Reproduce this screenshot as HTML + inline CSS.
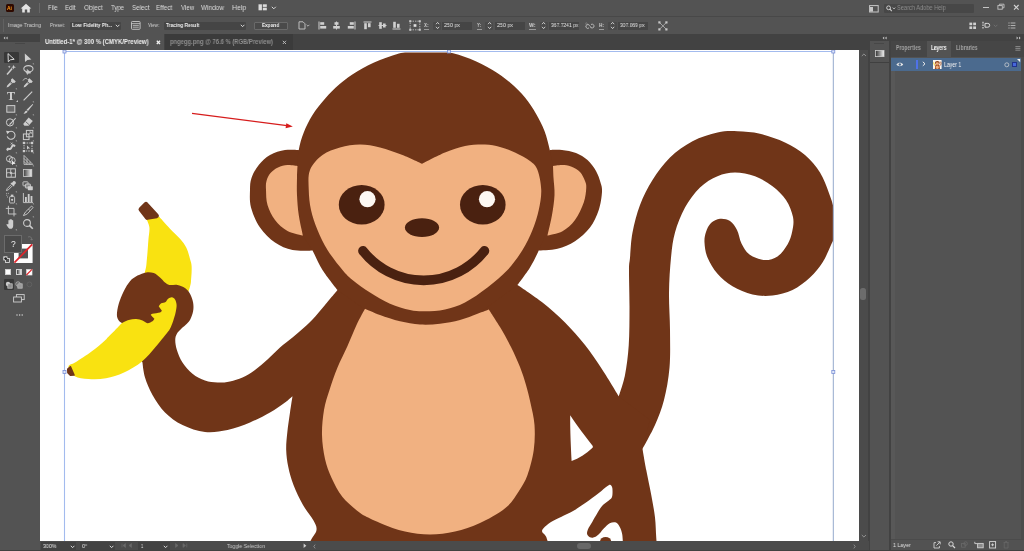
<!DOCTYPE html>
<html><head><meta charset="utf-8">
<style>
*{margin:0;padding:0;box-sizing:border-box}
html,body{width:1024px;height:551px;overflow:hidden;background:#535353;font-family:"Liberation Sans",sans-serif;}
.a{position:absolute}
#app{position:relative;width:1024px;height:551px;background:#535353;overflow:hidden}
.t{position:absolute;white-space:nowrap;transform-origin:0 50%;will-change:transform}
svg{overflow:visible}
</style></head><body>
<div id="app">
<div class="a" style="left:0px;top:0px;width:1024px;height:16px;background:#535353;"></div><div class="a" style="left:5.5px;top:3.8px;width:8.2px;height:7.8px;background:#2e0a00;border-radius:1.6px"></div><div class="t" style="left:7.20px;top:4.90px;font-size:5px;line-height:6.00px;color:#ff9a1a;font-weight:bold;transform:scaleX(1.000);opacity:1">Ai</div><svg class="a" style="left:20px;top:3px" width="12" height="10" viewBox="0 0 12 10"><path d="M6 0.8 L11.3 5.4 H9.8 V9.4 H7.2 V6.4 H4.8 V9.4 H2.2 V5.4 H0.7Z" fill="#e4e4e4"/></svg><div class="a" style="left:39px;top:3px;width:1px;height:10px;background:#686868;"></div><div class="t" style="left:47.50px;top:3.10px;font-size:7.5px;line-height:9.00px;color:#dcdcdc;font-weight:normal;transform:scaleX(0.786);opacity:1">File</div><div class="t" style="left:65.00px;top:3.10px;font-size:7.5px;line-height:9.00px;color:#dcdcdc;font-weight:normal;transform:scaleX(0.812);opacity:1">Edit</div><div class="t" style="left:83.70px;top:3.10px;font-size:7.5px;line-height:9.00px;color:#dcdcdc;font-weight:normal;transform:scaleX(0.867);opacity:1">Object</div><div class="t" style="left:110.70px;top:3.10px;font-size:7.5px;line-height:9.00px;color:#dcdcdc;font-weight:normal;transform:scaleX(0.800);opacity:1">Type</div><div class="t" style="left:131.70px;top:3.10px;font-size:7.5px;line-height:9.00px;color:#dcdcdc;font-weight:normal;transform:scaleX(0.840);opacity:1">Select</div><div class="t" style="left:156.20px;top:3.10px;font-size:7.5px;line-height:9.00px;color:#dcdcdc;font-weight:normal;transform:scaleX(0.856);opacity:1">Effect</div><div class="t" style="left:180.50px;top:3.10px;font-size:7.5px;line-height:9.00px;color:#dcdcdc;font-weight:normal;transform:scaleX(0.819);opacity:1">View</div><div class="t" style="left:201.20px;top:3.10px;font-size:7.5px;line-height:9.00px;color:#dcdcdc;font-weight:normal;transform:scaleX(0.862);opacity:1">Window</div><div class="t" style="left:232.00px;top:3.10px;font-size:7.5px;line-height:9.00px;color:#dcdcdc;font-weight:normal;transform:scaleX(0.921);opacity:1">Help</div><svg class="a" style="left:258px;top:4px" width="10" height="7" viewBox="0 0 10 7"><rect x="0.5" y="0.3" width="3.4" height="6" fill="#dcdcdc"/><rect x="4.8" y="0.3" width="4" height="2.6" fill="#dcdcdc"/><rect x="4.8" y="3.7" width="4" height="2.6" fill="#dcdcdc"/></svg><svg class="a" style="left:271px;top:5.5px" width="6" height="4" viewBox="0 0 6 4"><path d="M0.8 0.8 L2.8 2.8 L4.8 0.8" stroke="#dcdcdc" stroke-width="1" fill="none"/></svg><svg class="a" style="left:869px;top:4.5px" width="10" height="8" viewBox="0 0 10 8"><rect x="0.6" y="0.6" width="8.6" height="6.4" fill="none" stroke="#c8c8c8" stroke-width="1"/><rect x="1" y="2" width="3" height="4.6" fill="#c8c8c8"/></svg><div class="a" style="left:884px;top:3.8px;width:89.5px;height:9px;background:#474747;border-radius:1px"></div><svg class="a" style="left:885.5px;top:5px" width="12" height="7" viewBox="0 0 12 7"><circle cx="2.6" cy="2.8" r="1.9" fill="none" stroke="#d0d0d0" stroke-width="1"/><path d="M4 4.2 L5.8 6.2" stroke="#d0d0d0" stroke-width="1.1"/><path d="M6.8 2.6 L8 3.9 L9.2 2.6" stroke="#d0d0d0" stroke-width="0.9" fill="none"/></svg><div class="t" style="left:896.70px;top:3.80px;font-size:7px;line-height:8.40px;color:#8c8c8c;font-weight:normal;transform:scaleX(0.809);opacity:1">Search Adobe Help</div><div class="a" style="left:983px;top:6.5px;width:5.5px;height:1px;background:#c4c4c4;"></div><svg class="a" style="left:996.5px;top:3px" width="8" height="8" viewBox="0 0 8 8"><rect x="0.9" y="2.6" width="4.4" height="3.6" fill="none" stroke="#c4c4c4" stroke-width="0.9"/><path d="M2.4 2.4 V1.2 H7 V4.8 H5.6" fill="none" stroke="#c4c4c4" stroke-width="0.9"/></svg><svg class="a" style="left:1012.5px;top:3.5px" width="7" height="7" viewBox="0 0 7 7"><path d="M1 1 L5.6 5.6 M5.6 1 L1 5.6" stroke="#d4d4d4" stroke-width="1.1"/></svg>
<div class="a" style="left:0px;top:16px;width:1024px;height:18px;background:#535353;"></div><div class="a" style="left:0px;top:16px;width:1024px;height:1px;background:#484848;"></div><div class="a" style="left:2.5px;top:19px;width:1px;height:13px;background:#616161;"></div><div class="t" style="left:8.00px;top:22.20px;font-size:6.0px;line-height:7.20px;color:#d2d2d2;font-weight:normal;transform:scaleX(0.868);opacity:1">Image Tracing</div><div class="t" style="left:50.00px;top:22.20px;font-size:6.0px;line-height:7.20px;color:#d2d2d2;font-weight:normal;transform:scaleX(0.789);opacity:1">Preset:</div><div class="a" style="left:69.5px;top:22px;width:51px;height:7.6px;background:#454545;border-radius:1px"></div><div class="t" style="left:72.00px;top:22.32px;font-size:5.8px;line-height:6.96px;color:#f0f0f0;font-weight:bold;transform:scaleX(0.852);opacity:1">Low Fidelity Ph...</div><svg class="a" style="left:115px;top:23.8px" width="6" height="4" viewBox="0 0 6 4"><path d="M0.8 0.8 L2.6 2.7 L4.4 0.8" stroke="#d8d8d8" stroke-width="1" fill="none"/></svg><svg class="a" style="left:130.5px;top:21px" width="10" height="9" viewBox="0 0 10 9"><rect x="0.5" y="0.5" width="8.6" height="7.8" rx="0.8" fill="none" stroke="#c8c8c8" stroke-width="0.9"/><path d="M0.5 2.6 H9.1 M1.8 4.4 H7.8 M1.8 6.2 H7.8" stroke="#c8c8c8" stroke-width="0.8"/></svg><div class="t" style="left:147.50px;top:22.20px;font-size:6.0px;line-height:7.20px;color:#d2d2d2;font-weight:normal;transform:scaleX(0.769);opacity:1">View:</div><div class="a" style="left:163.7px;top:22px;width:82.5px;height:7.6px;background:#454545;border-radius:1px"></div><div class="t" style="left:166.00px;top:22.32px;font-size:5.8px;line-height:6.96px;color:#f0f0f0;font-weight:bold;transform:scaleX(0.833);opacity:1">Tracing Result</div><svg class="a" style="left:240px;top:23.8px" width="6" height="4" viewBox="0 0 6 4"><path d="M0.8 0.8 L2.6 2.7 L4.4 0.8" stroke="#d8d8d8" stroke-width="1" fill="none"/></svg><div class="a" style="left:253.5px;top:21.6px;width:34px;height:8.4px;background:#4a4a4a;border:1px solid #6a6a6a;border-radius:1px"></div><div class="t" style="left:262.00px;top:22.32px;font-size:5.8px;line-height:6.96px;color:#f0f0f0;font-weight:bold;transform:scaleX(0.819);opacity:1">Expand</div><svg class="a" style="left:298px;top:21px" width="13" height="9" viewBox="0 0 13 9"><path d="M1 0.8 H5 L7 2.8 V8 H1Z" fill="none" stroke="#c8c8c8" stroke-width="0.9"/><path d="M8.6 3.8 L10 5.2 L11.4 3.8" stroke="#c8c8c8" stroke-width="0.8" fill="none"/></svg><svg class="a" style="left:318.3px;top:21.3px" width="9" height="9" viewBox="0 0 9 9"><path d="M1 0.5 V8.5" stroke="#d0d0d0" stroke-width="1"/><rect x="2.2" y="1.2" width="4" height="2.6" fill="#d0d0d0"/><rect x="2.2" y="5" width="6" height="2.6" fill="#d0d0d0"/></svg><svg class="a" style="left:332px;top:21.3px" width="9" height="9" viewBox="0 0 9 9"><path d="M4.5 0.5 V8.5" stroke="#d0d0d0" stroke-width="1"/><rect x="2.5" y="1.2" width="4" height="2.6" fill="#d0d0d0"/><rect x="1.2" y="5" width="6.6" height="2.6" fill="#d0d0d0"/></svg><svg class="a" style="left:346.7px;top:21.3px" width="9" height="9" viewBox="0 0 9 9"><path d="M8 0.5 V8.5" stroke="#d0d0d0" stroke-width="1"/><rect x="2.8" y="1.2" width="4" height="2.6" fill="#d0d0d0"/><rect x="0.8" y="5" width="6" height="2.6" fill="#d0d0d0"/></svg><svg class="a" style="left:363.3px;top:21.3px" width="9" height="9" viewBox="0 0 9 9"><path d="M0.5 1 H8.5" stroke="#d0d0d0" stroke-width="1"/><rect x="1.2" y="2.2" width="2.6" height="6" fill="#d0d0d0"/><rect x="5" y="2.2" width="2.6" height="4" fill="#d0d0d0"/></svg><svg class="a" style="left:377.5px;top:21.3px" width="9" height="9" viewBox="0 0 9 9"><path d="M0.5 4.5 H8.5" stroke="#d0d0d0" stroke-width="1"/><rect x="1.2" y="1.2" width="2.6" height="6.6" fill="#d0d0d0"/><rect x="5" y="2.5" width="2.6" height="4" fill="#d0d0d0"/></svg><svg class="a" style="left:391.5px;top:21.3px" width="9" height="9" viewBox="0 0 9 9"><path d="M0.5 8 H8.5" stroke="#d0d0d0" stroke-width="1"/><rect x="1.2" y="0.8" width="2.6" height="6" fill="#d0d0d0"/><rect x="5" y="2.8" width="2.6" height="4" fill="#d0d0d0"/></svg><svg class="a" style="left:408.5px;top:20.3px" width="12" height="11" viewBox="0 0 12 11"><rect x="1.2" y="1.2" width="9.6" height="8.6" fill="none" stroke="#c8c8c8" stroke-width="0.8" stroke-dasharray="1.4 1"/><rect x="4.6" y="4.2" width="2.8" height="2.6" fill="#e0e0e0"/><g fill="#c8c8c8"><rect x="0.2" y="0.2" width="2" height="2"/><rect x="9.8" y="0.2" width="2" height="2"/><rect x="0.2" y="8.8" width="2" height="2"/><rect x="9.8" y="8.8" width="2" height="2"/></g></svg><div class="t" style="left:424.00px;top:22.20px;font-size:6px;line-height:7.20px;color:#d2d2d2;font-weight:bold;transform:scaleX(0.750);opacity:1">X:</div><div class="a" style="left:424px;top:29px;width:4.5px;height:0.6px;background:#9a9a9a;"></div><div class="a" style="left:433.09999999999997px;top:22px;width:8.4px;height:7.6px;background:#4a4a4a;border-radius:1px"></div><svg class="a" style="left:434.7px;top:21.3px" width="6" height="9" viewBox="0 0 6 9"><path d="M1 3.2 L2.6 1.4 L4.2 3.2 M1 5.8 L2.6 7.6 L4.2 5.8" stroke="#d8d8d8" stroke-width="0.9" fill="none"/></svg><div class="a" style="left:442px;top:22px;width:30px;height:7.6px;background:#454545;"></div><div class="t" style="left:444.00px;top:22.20px;font-size:6px;line-height:7.20px;color:#e4e4e4;font-weight:normal;transform:scaleX(0.888);opacity:1">250 px</div><div class="t" style="left:477.00px;top:22.20px;font-size:6px;line-height:7.20px;color:#d2d2d2;font-weight:bold;transform:scaleX(0.720);opacity:1">Y:</div><div class="a" style="left:477px;top:29px;width:4.5px;height:0.6px;background:#9a9a9a;"></div><div class="a" style="left:485.09999999999997px;top:22px;width:8.4px;height:7.6px;background:#4a4a4a;border-radius:1px"></div><svg class="a" style="left:486.7px;top:21.3px" width="6" height="9" viewBox="0 0 6 9"><path d="M1 3.2 L2.6 1.4 L4.2 3.2 M1 5.8 L2.6 7.6 L4.2 5.8" stroke="#d8d8d8" stroke-width="0.9" fill="none"/></svg><div class="a" style="left:494.5px;top:22px;width:30px;height:7.6px;background:#454545;"></div><div class="t" style="left:496.50px;top:22.20px;font-size:6px;line-height:7.20px;color:#e4e4e4;font-weight:normal;transform:scaleX(0.888);opacity:1">250 px</div><div class="t" style="left:529.00px;top:22.20px;font-size:6px;line-height:7.20px;color:#d2d2d2;font-weight:bold;transform:scaleX(0.887);opacity:1">W:</div><div class="a" style="left:529px;top:29px;width:6.5px;height:0.6px;background:#9a9a9a;"></div><div class="a" style="left:539.6999999999999px;top:22px;width:8.4px;height:7.6px;background:#4a4a4a;border-radius:1px"></div><svg class="a" style="left:541.3px;top:21.3px" width="6" height="9" viewBox="0 0 6 9"><path d="M1 3.2 L2.6 1.4 L4.2 3.2 M1 5.8 L2.6 7.6 L4.2 5.8" stroke="#d8d8d8" stroke-width="0.9" fill="none"/></svg><div class="a" style="left:549px;top:22px;width:30px;height:7.6px;background:#454545;"></div><div class="t" style="left:550.70px;top:22.20px;font-size:6px;line-height:7.20px;color:#e4e4e4;font-weight:normal;transform:scaleX(0.827);opacity:1">367.7241 px</div><svg class="a" style="left:584.5px;top:21.5px" width="10" height="8" viewBox="0 0 10 8"><path d="M4.6 3.6 A1.9 1.9 0 1 0 4 5.6 M5.2 3.9 A1.9 1.9 0 1 0 6 2.2" stroke="#c0c0c0" stroke-width="0.9" fill="none" transform="translate(0,0.3)"/><path d="M1.4 0.6 L2.2 1.6 M0.4 1.8 L1.5 2.3" stroke="#c0c0c0" stroke-width="0.6"/></svg><div class="t" style="left:599.00px;top:22.20px;font-size:6px;line-height:7.20px;color:#d2d2d2;font-weight:bold;transform:scaleX(0.790);opacity:1">H:</div><div class="a" style="left:599px;top:29px;width:5px;height:0.6px;background:#9a9a9a;"></div><div class="a" style="left:608.1999999999999px;top:22px;width:8.4px;height:7.6px;background:#4a4a4a;border-radius:1px"></div><svg class="a" style="left:609.8px;top:21.3px" width="6" height="9" viewBox="0 0 6 9"><path d="M1 3.2 L2.6 1.4 L4.2 3.2 M1 5.8 L2.6 7.6 L4.2 5.8" stroke="#d8d8d8" stroke-width="0.9" fill="none"/></svg><div class="a" style="left:618px;top:22px;width:30px;height:7.6px;background:#454545;"></div><div class="t" style="left:620.00px;top:22.20px;font-size:6px;line-height:7.20px;color:#e4e4e4;font-weight:normal;transform:scaleX(0.825);opacity:1">307.069 px</div><svg class="a" style="left:657.5px;top:21px" width="10" height="10" viewBox="0 0 10 10"><g fill="#c8c8c8"><rect x="0.3" y="0.3" width="2.2" height="2.2"/><rect x="7.3" y="0.3" width="2.2" height="2.2"/><rect x="0.3" y="7.3" width="2.2" height="2.2"/><rect x="7.3" y="7.3" width="2.2" height="2.2"/></g><path d="M2 2 L7.8 7.8 M7.8 2 L2 7.8" stroke="#bcbcbc" stroke-width="0.75"/></svg><svg class="a" style="left:969px;top:21.5px" width="8" height="8" viewBox="0 0 8 8"><g fill="#cfcfcf"><rect x="0.4" y="0.6" width="2.8" height="2.6"/><rect x="4.2" y="0.6" width="2.8" height="2.6"/><rect x="0.4" y="4.4" width="2.8" height="2.6"/><rect x="4.2" y="4.4" width="2.8" height="2.6"/></g></svg><svg class="a" style="left:982.3px;top:21px" width="9" height="9" viewBox="0 0 9 9"><path d="M1 0.8 V8.2" stroke="#d8d8d8" stroke-width="1.2" stroke-dasharray="1.6 1"/><path d="M3 2.4 H5.8 A1.9 1.9 0 0 1 5.8 6.2 H3Z" fill="none" stroke="#d8d8d8" stroke-width="1"/></svg><svg class="a" style="left:993.3px;top:23.8px" width="6" height="4" viewBox="0 0 6 4"><path d="M0.8 0.8 L2.6 2.7 L4.4 0.8" stroke="#6e6e6e" stroke-width="1" fill="none"/></svg><svg class="a" style="left:1008.3px;top:22px" width="8" height="7" viewBox="0 0 8 7"><path d="M0.4 1 H1.6 M0.4 3.5 H1.6 M0.4 6 H1.6" stroke="#bcbcbc" stroke-width="0.9"/><path d="M2.6 1 H7.4 M2.6 3.5 H7.4 M2.6 6 H7.4" stroke="#bcbcbc" stroke-width="0.9"/></svg>
<div class="a" style="left:0px;top:34px;width:869px;height:16px;background:#424242;"></div><div class="a" style="left:40px;top:34px;width:124px;height:16px;background:#535353;"></div><div class="t" style="left:44.50px;top:38.44px;font-size:6.6px;line-height:7.92px;color:#f0f0f0;font-weight:bold;transform:scaleX(0.907);opacity:1">Untitled-1* @ 300 % (CMYK/Preview)</div><svg class="a" style="left:155.8px;top:40px" width="5" height="5" viewBox="0 0 5 5"><path d="M0.8 0.8 L4 4 M4 0.8 L0.8 4" stroke="#f0f0f0" stroke-width="1.3"/></svg><div class="a" style="left:164.5px;top:34px;width:128.5px;height:16px;background:#3b3b3b;"></div><div class="t" style="left:169.50px;top:38.44px;font-size:6.6px;line-height:7.92px;color:#8e8e8e;font-weight:bold;transform:scaleX(0.888);opacity:1">pngegg.png @ 76.6 % (RGB/Preview)</div><svg class="a" style="left:281.7px;top:40px" width="5" height="5" viewBox="0 0 5 5"><path d="M0.8 0.8 L4 4 M4 0.8 L0.8 4" stroke="#b8b8b8" stroke-width="1"/></svg>
<div class="a" style="left:0px;top:34px;width:40px;height:517px;background:#535353;"></div><div class="a" style="left:0px;top:34px;width:40px;height:7.5px;background:#424242;"></div><svg class="a" style="left:3px;top:36px" width="6" height="4" viewBox="0 0 6 4"><path d="M2.2 0.6 L0.6 2 L2.2 3.4Z M4.6 0.6 L3 2 L4.6 3.4Z" fill="#c8c8c8"/></svg><div class="a" style="left:14.5px;top:43.3px;width:10px;height:1px;background:#474747;"></div><div class="a" style="left:3.5px;top:52.2px;width:15.5px;height:11.2px;background:#383838;border-radius:1px"></div><svg class="a" style="left:5.199999999999999px;top:51.7px" width="12" height="12" viewBox="0 0 12 12"><path d="M3 1.6 L3.3 9.8 L5.4 7.8 L9.2 7.3Z" fill="none" stroke="#e2e2e2" stroke-width="0.95" stroke-linejoin="round"/></svg><svg class="a" style="left:21.5px;top:51.7px" width="12" height="12" viewBox="0 0 12 12"><path d="M2.8 1.4 L3 10 L5.4 7.9 L9.4 7.5Z" fill="#cfcfcf"/><path d="M10.6 10.6 L12 12 H10.6Z" fill="#c8c8c8" transform="translate(0.3,0.3)"/></svg><svg class="a" style="left:5.199999999999999px;top:64.4px" width="12" height="12" viewBox="0 0 12 12"><path d="M2 10.4 L7.2 4.4" stroke="#cdcdcd" stroke-width="1.5"/><path d="M8.6 0.8 L9.2 2.6 L11 3.2 L9.2 3.8 L8.6 5.6 L8 3.8 L6.2 3.2 L8 2.6Z" fill="#cdcdcd"/><path d="M4.2 1.4 L4.6 2.4 L5.6 2.8 L4.6 3.2 L4.2 4.2 L3.8 3.2 L2.8 2.8 L3.8 2.4Z" fill="#cdcdcd"/></svg><svg class="a" style="left:21.5px;top:64.4px" width="12" height="12" viewBox="0 0 12 12"><ellipse cx="6.4" cy="4.8" rx="4.6" ry="3.2" fill="none" stroke="#cdcdcd" stroke-width="1.1"/><path d="M4.6 7.6 C3.6 8.4 4.4 9.6 5.6 9.2 M5.2 5.4 L5.2 10.4 L6.6 9.2 L8.8 9Z" fill="#cdcdcd" stroke="#cdcdcd" stroke-width="0.6"/></svg><svg class="a" style="left:5.199999999999999px;top:77.2px" width="12" height="12" viewBox="0 0 12 12"><path d="M7.4 1.2 L10.8 4.6 L9.4 6 L7.8 5.8 L3.6 9.8 L1.6 10.4 L2.2 8.4 L6.2 4.2 L6 2.6Z" fill="#cdcdcd"/><circle cx="6.2" cy="5.8" r="0.8" fill="#535353"/><path d="M10.6 10.6 L12 12 H10.6Z" fill="#c8c8c8" transform="translate(0.3,0.3)"/></svg><svg class="a" style="left:21.5px;top:77.2px" width="12" height="12" viewBox="0 0 12 12"><path d="M7.4 1.2 L10.8 4.6 L9.4 6 L7.8 5.8 L3.6 9.8 L1.6 10.4 L2.2 8.4 L6.2 4.2 L6 2.6Z" fill="#cdcdcd"/><circle cx="6.2" cy="5.8" r="0.8" fill="#535353"/><path d="M1 3.6 C2.4 1 4.6 1 5.4 2.4" stroke="#cdcdcd" stroke-width="0.9" fill="none"/></svg><div class="t" style="left:7.199999999999999px;top:89.0px;font-family:'Liberation Serif',serif;font-weight:bold;font-size:12px;line-height:14px;color:#d4d4d4">T</div><svg class="a" style="left:16.2px;top:100.2px" width="3" height="3" viewBox="0 0 3 3"><path d="M2 0 V2 H0Z" fill="#c8c8c8"/></svg><svg class="a" style="left:21.5px;top:90.2px" width="12" height="12" viewBox="0 0 12 12"><path d="M1.6 10.4 L10.2 1.6" stroke="#cdcdcd" stroke-width="1.2"/><path d="M10.6 10.6 L12 12 H10.6Z" fill="#c8c8c8" transform="translate(0.3,0.3)"/></svg><svg class="a" style="left:5.199999999999999px;top:103.0px" width="12" height="12" viewBox="0 0 12 12"><rect x="1.8" y="2.6" width="8" height="6.6" fill="#6b6b6b" stroke="#cdcdcd" stroke-width="1"/><path d="M10.6 10.6 L12 12 H10.6Z" fill="#c8c8c8" transform="translate(0.3,0.3)"/></svg><svg class="a" style="left:21.5px;top:103.0px" width="12" height="12" viewBox="0 0 12 12"><path d="M10.6 1 L11.2 1.6 L6 8 L4.6 6.8Z" fill="#cdcdcd"/><path d="M4.2 7.4 L5.6 8.6 C5 10.2 3 10.8 1.4 10.6 C2.8 9.8 2.6 8 4.2 7.4Z" fill="#cdcdcd"/><path d="M10.6 10.6 L12 12 H10.6Z" fill="#c8c8c8" transform="translate(0.3,0.3)"/></svg><svg class="a" style="left:5.199999999999999px;top:115.6px" width="12" height="12" viewBox="0 0 12 12"><circle cx="5" cy="6.4" r="3.6" fill="none" stroke="#cdcdcd" stroke-width="1"/><path d="M4.6 7.8 L10.4 1.8 L11 2.6 L5.6 8.6 L4 9Z" fill="#cdcdcd"/><path d="M10.6 10.6 L12 12 H10.6Z" fill="#c8c8c8" transform="translate(0.3,0.3)"/></svg><svg class="a" style="left:21.5px;top:115.6px" width="12" height="12" viewBox="0 0 12 12"><path d="M6.6 1.6 L10.8 5 L6.6 9.8 L2.4 9.8 L1.2 8Z" fill="#cdcdcd"/><path d="M3.6 5.6 L7.2 8.8" stroke="#535353" stroke-width="0.8"/><path d="M10.6 10.6 L12 12 H10.6Z" fill="#c8c8c8" transform="translate(0.3,0.3)"/></svg><svg class="a" style="left:5.199999999999999px;top:128.6px" width="12" height="12" viewBox="0 0 12 12"><path d="M3 3.6 A4 4 0 1 1 2.2 7.4" fill="none" stroke="#cdcdcd" stroke-width="1.1"/><path d="M1 1.8 L4.8 2.2 L2.4 5.2Z" fill="#cdcdcd"/><path d="M10.6 10.6 L12 12 H10.6Z" fill="#c8c8c8" transform="translate(0.3,0.3)"/></svg><svg class="a" style="left:21.5px;top:128.6px" width="12" height="12" viewBox="0 0 12 12"><rect x="1.4" y="5" width="5.6" height="5.6" fill="none" stroke="#cdcdcd" stroke-width="1"/><rect x="4.4" y="1.4" width="6.4" height="6.4" fill="none" stroke="#cdcdcd" stroke-width="1"/><path d="M6.4 5.8 L9 3.2 M9.2 5 V3 H7.2" stroke="#cdcdcd" stroke-width="0.8" fill="none"/><path d="M10.6 10.6 L12 12 H10.6Z" fill="#c8c8c8" transform="translate(0.3,0.3)"/></svg><svg class="a" style="left:5.199999999999999px;top:141.4px" width="12" height="12" viewBox="0 0 12 12"><path d="M1.2 8.6 C3 4.4 4.6 9.4 6.2 5 C7 2.6 9 2.6 10.6 4.6 L9.8 6 C8.6 5 7.8 5.4 7.2 7 C6 10.4 3.6 8 2.4 10.2Z" fill="#cdcdcd"/><path d="M5.8 1.6 L7.6 3.6 M7.6 1.6 L5.8 3.6" stroke="#cdcdcd" stroke-width="0.8"/><path d="M10.6 10.6 L12 12 H10.6Z" fill="#c8c8c8" transform="translate(0.3,0.3)"/></svg><svg class="a" style="left:21.5px;top:141.4px" width="12" height="12" viewBox="0 0 12 12"><rect x="2" y="2" width="8" height="8" fill="none" stroke="#cdcdcd" stroke-width="0.9" stroke-dasharray="1.6 1"/><g fill="#cdcdcd"><rect x="0.8" y="0.8" width="2.2" height="2.2"/><rect x="9" y="0.8" width="2.2" height="2.2"/><rect x="0.8" y="9" width="2.2" height="2.2"/><rect x="9" y="9" width="2.2" height="2.2"/></g><path d="M5 4.4 L5 8.6 L6.2 7.6 L8.2 7.4Z" fill="#cdcdcd"/><path d="M10.6 10.6 L12 12 H10.6Z" fill="#c8c8c8" transform="translate(0.3,0.3)"/></svg><svg class="a" style="left:5.199999999999999px;top:154.1px" width="12" height="12" viewBox="0 0 12 12"><circle cx="4.4" cy="4.8" r="3" fill="none" stroke="#cdcdcd" stroke-width="0.9"/><circle cx="7.2" cy="6.4" r="3" fill="none" stroke="#cdcdcd" stroke-width="0.9"/><path d="M7 6.6 L7 11.2 L8.4 10 L10.6 9.8Z" fill="#e8e8e8"/><path d="M10.6 10.6 L12 12 H10.6Z" fill="#c8c8c8" transform="translate(0.3,0.3)"/></svg><svg class="a" style="left:21.5px;top:154.1px" width="12" height="12" viewBox="0 0 12 12"><path d="M2 1.4 V10.4 H10.8 M2 1.4 L10.8 10.4 M2 4.4 L7.8 10.4 M2 7.4 L4.8 10.4 M5 4.6 V10.4 M8 7.6 V10.4" stroke="#cdcdcd" stroke-width="0.8" fill="none"/><path d="M10.6 10.6 L12 12 H10.6Z" fill="#c8c8c8" transform="translate(0.3,0.3)"/></svg><svg class="a" style="left:5.199999999999999px;top:166.9px" width="12" height="12" viewBox="0 0 12 12"><rect x="1.6" y="1.8" width="8.8" height="8.4" fill="none" stroke="#cdcdcd" stroke-width="1"/><path d="M1.6 6 C4 4.6 8 7.4 10.4 6 M6 1.8 C4.6 4.4 7.4 7.6 6 10.2" stroke="#cdcdcd" stroke-width="0.9" fill="none"/><circle cx="6" cy="6" r="1" fill="#cdcdcd"/></svg><svg class="a" style="left:22.9px;top:168.9px" width="10" height="9.2" viewBox="0 0 10 9.2"><defs><linearGradient id="tg" x1="0" x2="1"><stop offset="0" stop-color="#3a3a3a"/><stop offset="1" stop-color="#f4f4f4"/></linearGradient></defs><rect x="0.4" y="0.4" width="8.4" height="7.2" fill="url(#tg)" stroke="#cdcdcd" stroke-width="0.8"/></svg><svg class="a" style="left:5.199999999999999px;top:179.6px" width="12" height="12" viewBox="0 0 12 12"><path d="M8.6 1 C9.8 0.6 11.4 2.2 10.8 3.4 L9 5.2 L9.6 5.8 L8.8 6.6 L5.4 3.2 L6.2 2.4 L6.8 3Z" fill="#cdcdcd"/><path d="M6.4 4.4 L2.2 8.6 L1.4 10.6 L3.4 9.8 L7.6 5.6" fill="none" stroke="#cdcdcd" stroke-width="0.9"/><path d="M10.6 10.6 L12 12 H10.6Z" fill="#c8c8c8" transform="translate(0.3,0.3)"/></svg><svg class="a" style="left:21.5px;top:179.6px" width="12" height="12" viewBox="0 0 12 12"><rect x="1" y="1.8" width="5" height="4" rx="0.6" fill="none" stroke="#cdcdcd" stroke-width="0.9"/><rect x="3.4" y="4" width="5" height="4" rx="0.6" fill="#8a8a8a" stroke="#cdcdcd" stroke-width="0.9"/><rect x="5.8" y="6.2" width="5" height="4" rx="0.6" fill="#cdcdcd"/></svg><svg class="a" style="left:5.199999999999999px;top:192.3px" width="12" height="12" viewBox="0 0 12 12"><rect x="4.6" y="4.6" width="5" height="6.4" rx="0.8" fill="none" stroke="#cdcdcd" stroke-width="0.9"/><rect x="5.8" y="2.6" width="2.6" height="2" fill="#cdcdcd"/><path d="M1.2 1.4 H3.8 M1.2 3.2 H3.2 M2 5 H3.6" stroke="#cdcdcd" stroke-width="0.8" stroke-dasharray="1 0.8"/><circle cx="7.1" cy="7.8" r="1.1" fill="#cdcdcd"/><path d="M10.6 10.6 L12 12 H10.6Z" fill="#c8c8c8" transform="translate(0.3,0.3)"/></svg><svg class="a" style="left:21.5px;top:192.3px" width="12" height="12" viewBox="0 0 12 12"><path d="M1.4 1 V10.6 H11" stroke="#cdcdcd" stroke-width="0.9" fill="none"/><rect x="3" y="5" width="1.8" height="5" fill="#cdcdcd"/><rect x="5.8" y="2" width="1.8" height="8" fill="#cdcdcd"/><rect x="8.6" y="4" width="1.8" height="6" fill="#cdcdcd"/><path d="M10.6 10.6 L12 12 H10.6Z" fill="#c8c8c8" transform="translate(0.3,0.3)"/></svg><svg class="a" style="left:5.199999999999999px;top:205.2px" width="12" height="12" viewBox="0 0 12 12"><path d="M3.4 0.8 V9 H11.4 M0.8 3.4 H9 V11.4" stroke="#cdcdcd" stroke-width="0.9" fill="none"/></svg><svg class="a" style="left:21.5px;top:205.2px" width="12" height="12" viewBox="0 0 12 12"><path d="M9.6 1 L11 2.6 L5.4 8.8 L3 10 L1.4 10.6 L2.2 9 L3.6 6.8Z" fill="none" stroke="#cdcdcd" stroke-width="0.9" stroke-linejoin="round"/><path d="M6.4 4 L8.2 5.8" stroke="#cdcdcd" stroke-width="0.8"/><path d="M10.6 10.6 L12 12 H10.6Z" fill="#c8c8c8" transform="translate(0.3,0.3)"/></svg><svg class="a" style="left:5.199999999999999px;top:217.8px" width="12" height="12" viewBox="0 0 12 12"><path d="M3.4 6 V2.6 C3.4 1.8 4.6 1.8 4.6 2.6 V1.6 C4.6 0.8 5.8 0.8 5.8 1.6 V1.8 C5.8 1 7 1 7 1.8 V2.6 C7 1.8 8.2 1.8 8.2 2.6 V7.4 C8.2 9.6 7.2 10.8 5.6 10.8 C4 10.8 3.2 10 1.6 7 C1.2 6.2 2.2 5.6 2.8 6.4Z" fill="#cdcdcd"/><path d="M10.6 10.6 L12 12 H10.6Z" fill="#c8c8c8" transform="translate(0.3,0.3)"/></svg><svg class="a" style="left:21.5px;top:217.8px" width="12" height="12" viewBox="0 0 12 12"><circle cx="5" cy="5" r="3.4" fill="none" stroke="#cdcdcd" stroke-width="1.1"/><path d="M7.4 7.4 L10.8 10.8" stroke="#cdcdcd" stroke-width="1.6"/></svg><svg class="a" style="left:13.5px;top:243.6px" width="18.6" height="19" viewBox="0 0 18.6 19"><rect x="0" y="0" width="18.6" height="19" fill="#fdfdfd"/><rect x="4.6" y="4.6" width="9.4" height="9.8" fill="#535353"/><path d="M0.4 18.6 L18.2 0.4" stroke="#e0242a" stroke-width="1.7"/></svg><div class="a" style="left:3.5px;top:234.8px;width:18.8px;height:18.2px;background:#4a4a4a;border:1px solid #6c6c6c"></div><div class="t" style="left:10.60px;top:238.90px;font-size:8.5px;line-height:10.20px;color:#f0f0f0;font-weight:normal;transform:scaleX(0.931);opacity:1">?</div><svg class="a" style="left:26.5px;top:234.6px" width="6" height="6" viewBox="0 0 6 6"><path d="M1 2.2 C3 0.8 5 2.4 4.6 4.8 M3.6 4 L4.6 5.2 L5.6 4" stroke="#7e7e7e" stroke-width="0.8" fill="none"/></svg><svg class="a" style="left:3.4px;top:256px" width="7" height="7" viewBox="0 0 7 7"><rect x="0.4" y="0.4" width="4" height="4" fill="#f0f0f0"/><rect x="2.4" y="2.4" width="4" height="4" fill="#535353" stroke="#e8e8e8" stroke-width="0.8"/><circle cx="2.6" cy="2.6" r="1.4" fill="#222"/></svg><div class="a" style="left:5.2px;top:268.5px;width:6.2px;height:6.2px;background:#fdfdfd;border:0.5px solid #cfcfcf"></div><div class="a" style="left:15.8px;top:268.5px;width:6.2px;height:6.2px;background:linear-gradient(90deg,#3a3a3a,#f0f0f0);border:0.5px solid #cfcfcf"></div><svg class="a" style="left:26.2px;top:268.5px" width="6.4" height="6.4" viewBox="0 0 6.4 6.4"><rect x="0.3" y="0.3" width="5.8" height="5.8" fill="#fff" stroke="#cfcfcf" stroke-width="0.5"/><path d="M0.4 6 L6 0.4" stroke="#e0242a" stroke-width="1.2"/></svg><div class="a" style="left:3.6px;top:279.4px;width:10.4px;height:10.4px;background:#383838;border-radius:1px"></div><svg class="a" style="left:5.2px;top:281px" width="8" height="8" viewBox="0 0 8 8"><circle cx="3" cy="3" r="2.2" fill="#cdcdcd"/><rect x="2.8" y="2.8" width="4.4" height="4.4" fill="#8c8c8c" stroke="#cdcdcd" stroke-width="0.7"/></svg><svg class="a" style="left:15.4px;top:281px" width="8" height="8" viewBox="0 0 8 8"><circle cx="3" cy="3" r="2.2" fill="none" stroke="#bdbdbd" stroke-width="0.8"/><rect x="2.8" y="2.8" width="4.4" height="4.4" fill="#9a9a9a" stroke="#bdbdbd" stroke-width="0.7"/></svg><svg class="a" style="left:26px;top:281.4px" width="7" height="7" viewBox="0 0 7 7"><circle cx="3.4" cy="3.4" r="2.4" fill="none" stroke="#656565" stroke-width="0.8"/></svg><svg class="a" style="left:13.4px;top:293.8px" width="12" height="9" viewBox="0 0 12 9"><rect x="3.4" y="0.6" width="7.8" height="5" fill="#535353" stroke="#d0d0d0" stroke-width="0.9"/><rect x="0.6" y="3" width="7.8" height="5" fill="#535353" stroke="#d0d0d0" stroke-width="0.9"/></svg><svg class="a" style="left:15.6px;top:314.2px" width="8" height="2" viewBox="0 0 8 2"><circle cx="1" cy="1" r="0.75" fill="#d0d0d0"/><circle cx="3.6" cy="1" r="0.75" fill="#d0d0d0"/><circle cx="6.2" cy="1" r="0.75" fill="#d0d0d0"/></svg>
<div id="canvas" class="a" style="left:40px;top:50px;width:819px;height:491px;background:#fff;overflow:hidden">
<svg id="art" width="819" height="491" viewBox="40 50 819 491" style="position:absolute;left:0;top:0;overflow:hidden">
<defs><clipPath id="ab"><rect x="64.5" y="52.6" width="768.8" height="700"/></clipPath></defs>
<g clip-path="url(#ab)">
<path d="M618.75 396.25 C618.75 396.25 623.33 383.54 625.00 375.00 C626.67 366.46 628.00 356.25 628.75 345.00 C629.50 333.75 629.46 320.00 629.50 307.50 C629.54 295.00 628.92 278.29 629.00 270.00 C629.08 261.71 629.42 264.00 630.00 257.75 C630.58 251.50 630.83 241.29 632.50 232.50 C634.17 223.71 636.67 213.75 640.00 205.00 C643.33 196.25 647.50 187.92 652.50 180.00 C657.50 172.08 663.33 163.96 670.00 157.50 C676.67 151.04 684.58 145.42 692.50 141.25 C700.42 137.08 710.00 134.17 717.50 132.50 C725.00 130.83 730.42 131.04 737.50 131.25 C744.58 131.46 752.08 131.88 760.00 133.75 C767.92 135.62 777.50 138.96 785.00 142.50 C792.50 146.04 799.17 150.00 805.00 155.00 C810.83 160.00 816.04 166.25 820.00 172.50 C823.96 178.75 826.42 186.25 828.75 192.50 C831.08 198.75 832.79 203.33 834.00 210.00 C835.21 216.67 836.50 226.67 836.00 232.50 C835.50 238.33 833.25 240.00 831.00 245.00 C828.75 250.00 826.00 257.08 822.50 262.50 C819.00 267.92 815.00 272.92 810.00 277.50 C805.00 282.08 798.75 287.00 792.50 290.00 C786.25 293.00 779.17 294.75 772.50 295.50 C765.83 296.25 759.17 296.04 752.50 294.50 C745.83 292.96 738.33 289.71 732.50 286.25 C726.67 282.79 721.67 278.54 717.50 273.75 C713.33 268.96 709.67 262.71 707.50 257.50 C705.33 252.29 704.75 246.75 704.50 242.50 C704.25 238.25 704.92 235.25 706.00 232.00 C707.08 228.75 708.67 225.21 711.00 223.00 C713.33 220.79 716.83 219.08 720.00 218.75 C723.17 218.42 727.17 219.12 730.00 221.00 C732.83 222.88 735.08 226.25 737.00 230.00 C738.92 233.75 739.42 239.40 741.50 243.50 C743.58 247.60 745.75 251.85 749.50 254.60 C753.25 257.35 759.33 259.70 764.00 260.00 C768.67 260.30 773.58 258.98 777.50 256.40 C781.42 253.82 785.03 248.73 787.50 244.50 C789.97 240.27 791.38 235.58 792.30 231.00 C793.22 226.42 794.05 222.17 793.00 217.00 C791.95 211.83 789.42 205.12 786.00 200.00 C782.58 194.88 777.67 190.21 772.50 186.25 C767.33 182.29 761.25 178.54 755.00 176.25 C748.75 173.96 741.25 172.50 735.00 172.50 C728.75 172.50 723.33 173.75 717.50 176.25 C711.67 178.75 705.42 182.29 700.00 187.50 C694.58 192.71 689.17 200.00 685.00 207.50 C680.83 215.00 677.33 224.12 675.00 232.50 C672.67 240.88 672.00 247.75 671.00 257.75 C670.00 267.75 669.17 280.46 669.00 292.50 C668.83 304.54 669.92 317.46 670.00 330.00 C670.08 342.54 670.50 356.08 669.50 367.75 C668.50 379.42 666.42 390.46 664.00 400.00 C661.58 409.54 658.58 416.88 655.00 425.00 C651.42 433.12 642.50 448.75 642.50 448.75 C642.50 448.75 600.00 440.00 600.00 440.00 C600.00 440.00 618.75 396.25 618.75 396.25Z" fill="#703518"/>
<path d="M146.60 219.60 C146.60 219.60 149.10 224.10 149.40 227.50 C149.70 230.90 148.82 234.77 148.40 240.00 C147.98 245.23 147.51 253.48 146.90 258.90 C146.29 264.32 146.73 265.65 144.75 272.50 C142.77 279.35 135.00 300.00 135.00 300.00 C135.00 300.00 180.00 312.00 180.00 312.00 C180.00 312.00 187.53 294.50 189.40 288.75 C191.28 283.00 190.88 281.29 191.25 277.50 C191.62 273.71 191.81 269.10 191.60 266.00 C191.39 262.90 190.89 261.98 190.00 258.90 C189.11 255.82 187.92 250.86 186.25 247.50 C184.58 244.14 182.71 241.88 180.00 238.75 C177.29 235.62 173.50 232.44 170.00 228.75 C166.50 225.06 159.00 216.60 159.00 216.60 C159.00 216.60 146.60 219.60 146.60 219.60Z" fill="#f9e211"/>
<path d="M140.8 209.4 L146 204.2 L156.6 215.9 L147.2 217.6 Z" fill="#703518" stroke="#703518" stroke-width="4.6" stroke-linejoin="round"/>
<path d="M337.50 290.00 C337.50 290.00 329.17 300.08 325.00 305.00 C320.83 309.92 316.46 315.33 312.50 319.50 C308.54 323.67 304.58 327.00 301.25 330.00 C297.92 333.00 296.04 334.58 292.50 337.50 C288.96 340.42 284.17 343.83 280.00 347.50 C275.83 351.17 271.67 355.75 267.50 359.50 C263.33 363.25 259.17 367.00 255.00 370.00 C250.83 373.00 246.67 375.60 242.50 377.50 C238.33 379.40 234.17 380.55 230.00 381.40 C225.83 382.25 221.67 382.73 217.50 382.60 C213.33 382.47 209.17 382.08 205.00 380.60 C200.83 379.12 196.25 376.77 192.50 373.75 C188.75 370.73 185.10 366.46 182.50 362.50 C179.90 358.54 178.11 353.75 176.90 350.00 C175.69 346.25 175.25 342.71 175.25 340.00 C175.25 337.29 175.86 335.65 176.90 333.75 C177.94 331.85 180.07 330.06 181.50 328.60 C182.93 327.14 184.08 326.43 185.50 325.00 C186.92 323.57 188.73 322.29 190.00 320.00 C191.27 317.71 192.58 314.17 193.10 311.25 C193.62 308.33 193.62 305.42 193.10 302.50 C192.58 299.58 191.35 296.15 190.00 293.75 C188.65 291.35 187.08 289.56 185.00 288.10 C182.92 286.64 180.10 285.52 177.50 285.00 C174.90 284.48 171.48 285.42 169.40 285.00 C167.32 284.58 166.57 283.75 165.00 282.50 C163.43 281.25 161.88 279.07 160.00 277.50 C158.12 275.93 156.04 273.95 153.75 273.10 C151.46 272.25 148.96 271.98 146.25 272.40 C143.54 272.82 140.21 274.12 137.50 275.60 C134.79 277.08 132.29 278.64 130.00 281.25 C127.71 283.86 125.62 287.50 123.75 291.25 C121.88 295.00 119.89 299.79 118.75 303.75 C117.61 307.71 116.90 312.19 116.90 315.00 C116.90 317.81 117.92 319.25 118.75 320.60 C119.58 321.95 121.90 323.10 121.90 323.10 C121.90 323.10 142.50 362.50 142.50 362.50 C142.50 362.50 143.33 372.08 145.00 377.50 C146.67 382.92 149.17 389.17 152.50 395.00 C155.83 400.83 160.00 407.50 165.00 412.50 C170.00 417.50 175.83 421.75 182.50 425.00 C189.17 428.25 197.50 431.17 205.00 432.00 C212.50 432.83 220.00 431.58 227.50 430.00 C235.00 428.42 242.92 425.42 250.00 422.50 C257.08 419.58 264.17 415.83 270.00 412.50 C275.83 409.17 281.25 405.21 285.00 402.50 C288.75 399.79 292.50 396.25 292.50 396.25 C292.50 396.25 290.87 406.46 290.00 412.50 C289.13 418.54 287.93 426.25 287.30 432.50 C286.67 438.75 286.03 444.25 286.20 450.00 C286.37 455.75 287.08 461.17 288.30 467.00 C289.52 472.83 291.05 478.67 293.50 485.00 C295.95 491.33 299.67 499.08 303.00 505.00 C306.33 510.92 311.25 516.33 313.50 520.50 C315.75 524.67 316.92 526.75 316.50 530.00 C316.08 533.25 313.75 535.00 311.00 540.00 C308.25 545.00 300.00 560.00 300.00 560.00 C300.00 560.00 658.00 560.00 658.00 560.00 C658.00 560.00 656.75 544.83 656.25 537.75 C655.75 530.67 655.83 524.62 655.00 517.50 C654.17 510.38 652.71 502.92 651.25 495.00 C649.79 487.08 647.71 477.71 646.25 470.00 C644.79 462.29 642.50 448.75 642.50 448.75 C642.50 448.75 650.00 420.00 650.00 420.00 C650.00 420.00 618.75 396.25 618.75 396.25 C618.75 396.25 608.12 378.54 602.50 370.00 C596.88 361.46 591.25 352.92 585.00 345.00 C578.75 337.08 572.08 329.58 565.00 322.50 C557.92 315.42 550.42 308.75 542.50 302.50 C534.58 296.25 517.50 285.00 517.50 285.00 C517.50 285.00 337.50 290.00 337.50 290.00Z" fill="#703518"/>
<path d="M298.75 150.00 C298.75 150.00 289.79 149.17 285.00 150.00 C280.21 150.83 274.38 152.50 270.00 155.00 C265.62 157.50 261.83 161.17 258.75 165.00 C255.67 168.83 252.96 173.83 251.50 178.00 C250.04 182.17 250.08 185.08 250.00 190.00 C249.92 194.92 249.33 201.25 251.00 207.50 C252.67 213.75 256.00 221.67 260.00 227.50 C264.00 233.33 269.58 238.75 275.00 242.50 C280.42 246.25 286.25 248.67 292.50 250.00 C298.75 251.33 312.50 250.50 312.50 250.50 C312.50 250.50 330.00 200.00 330.00 200.00 C330.00 200.00 298.75 150.00 298.75 150.00Z" fill="#703518"/>
<path d="M550.00 150.00 C550.00 150.00 557.67 149.50 562.00 150.00 C566.33 150.50 571.75 151.33 576.00 153.00 C580.25 154.67 584.17 157.00 587.50 160.00 C590.83 163.00 593.83 167.25 596.00 171.00 C598.17 174.75 599.50 179.00 600.50 182.50 C601.50 186.00 602.29 187.42 602.00 192.00 C601.71 196.58 600.75 204.08 598.75 210.00 C596.75 215.92 593.96 222.29 590.00 227.50 C586.04 232.71 580.42 237.71 575.00 241.25 C569.58 244.79 563.54 247.21 557.50 248.75 C551.46 250.29 538.75 250.50 538.75 250.50 C538.75 250.50 520.00 200.00 520.00 200.00 C520.00 200.00 550.00 150.00 550.00 150.00Z" fill="#703518"/>
<path d="M298.75 150.00 C299.88 143.75 301.46 138.33 303.75 132.50 C306.04 126.67 308.96 120.62 312.50 115.00 C316.04 109.38 320.42 103.96 325.00 98.75 C329.58 93.54 334.58 88.33 340.00 83.75 C345.42 79.17 350.83 75.21 357.50 71.25 C364.17 67.29 372.08 63.21 380.00 60.00 C387.92 56.79 397.33 53.83 405.00 52.00 C412.67 50.17 418.92 49.00 426.00 49.00 C433.08 49.00 440.17 50.38 447.50 52.00 C454.83 53.62 462.50 55.75 470.00 58.75 C477.50 61.75 485.83 66.04 492.50 70.00 C499.17 73.96 504.58 77.92 510.00 82.50 C515.42 87.08 520.67 92.29 525.00 97.50 C529.33 102.71 532.75 108.17 536.00 113.75 C539.25 119.33 542.17 124.79 544.50 131.00 C546.83 137.21 548.58 144.50 550.00 151.00 C551.42 157.50 552.50 163.50 553.00 170.00 C553.50 176.50 553.50 182.50 553.00 190.00 C552.50 197.50 551.33 207.50 550.00 215.00 C548.67 222.50 546.88 229.08 545.00 235.00 C543.12 240.92 541.25 245.08 538.75 250.50 C536.25 255.92 533.54 261.75 530.00 267.50 C526.46 273.25 517.50 285.00 517.50 285.00 C517.50 285.00 470.00 320.00 470.00 320.00 C470.00 320.00 380.00 320.00 380.00 320.00 C380.00 320.00 337.50 290.00 337.50 290.00 C337.50 290.00 326.67 276.58 322.50 270.00 C318.33 263.42 315.75 256.33 312.50 250.50 C309.25 244.67 305.42 240.92 303.00 235.00 C300.58 229.08 299.08 222.50 298.00 215.00 C296.92 207.50 296.67 197.50 296.50 190.00 C296.33 182.50 296.62 176.67 297.00 170.00 C297.38 163.33 297.62 156.25 298.75 150.00Z" fill="#703518"/>
<path d="M297.50 166.00 C297.50 166.00 290.75 164.75 287.50 165.00 C284.25 165.25 280.83 166.17 278.00 167.50 C275.17 168.83 272.42 170.75 270.50 173.00 C268.58 175.25 267.25 178.17 266.50 181.00 C265.75 183.83 265.83 186.00 266.00 190.00 C266.17 194.00 266.00 200.00 267.50 205.00 C269.00 210.00 271.67 215.67 275.00 220.00 C278.33 224.33 282.83 228.42 287.50 231.00 C292.17 233.58 303.00 235.50 303.00 235.50 C303.00 235.50 299.75 221.75 298.75 215.00 C297.75 208.25 297.29 201.17 297.00 195.00 C296.71 188.83 296.92 182.83 297.00 178.00 C297.08 173.17 297.50 166.00 297.50 166.00Z" fill="#f1b181"/>
<path d="M553.00 166.00 C553.00 166.00 559.00 164.92 562.00 165.00 C565.00 165.08 568.00 165.33 571.00 166.50 C574.00 167.67 577.67 169.58 580.00 172.00 C582.33 174.42 583.96 178.33 585.00 181.00 C586.04 183.67 586.46 184.42 586.25 188.00 C586.04 191.58 585.62 197.17 583.75 202.50 C581.88 207.83 578.54 215.21 575.00 220.00 C571.46 224.79 567.08 228.67 562.50 231.25 C557.92 233.83 547.50 235.50 547.50 235.50 C547.50 235.50 550.83 221.75 552.00 215.00 C553.17 208.25 554.25 201.17 554.50 195.00 C554.75 188.83 553.75 182.83 553.50 178.00 C553.25 173.17 553.00 166.00 553.00 166.00Z" fill="#f1b181"/>
<path d="M422.00 163.75 C422.00 163.75 437.83 155.46 445.00 152.50 C452.17 149.54 458.33 147.33 465.00 146.00 C471.67 144.67 479.17 144.33 485.00 144.50 C490.83 144.67 495.00 145.67 500.00 147.00 C505.00 148.33 510.00 150.17 515.00 152.50 C520.00 154.83 526.25 158.08 530.00 161.00 C533.75 163.92 535.62 165.17 537.50 170.00 C539.38 174.83 541.04 183.33 541.25 190.00 C541.46 196.67 540.21 203.33 538.75 210.00 C537.29 216.67 535.21 223.33 532.50 230.00 C529.79 236.67 526.67 243.33 522.50 250.00 C518.33 256.67 513.33 263.75 507.50 270.00 C501.67 276.25 494.58 282.08 487.50 287.50 C480.42 292.92 472.08 298.83 465.00 302.50 C457.92 306.17 451.67 308.04 445.00 309.50 C438.33 310.96 430.83 311.17 425.00 311.25 C419.17 311.33 415.83 311.25 410.00 310.00 C404.17 308.75 396.67 306.67 390.00 303.75 C383.33 300.83 376.25 296.46 370.00 292.50 C363.75 288.54 357.08 283.75 352.50 280.00 C347.92 276.25 346.67 275.00 342.50 270.00 C338.33 265.00 331.67 256.67 327.50 250.00 C323.33 243.33 320.25 236.67 317.50 230.00 C314.75 223.33 312.46 216.67 311.00 210.00 C309.54 203.33 308.92 196.67 308.75 190.00 C308.58 183.33 307.71 175.83 310.00 170.00 C312.29 164.17 317.50 158.75 322.50 155.00 C327.50 151.25 333.75 149.25 340.00 147.50 C346.25 145.75 353.33 144.50 360.00 144.50 C366.67 144.50 372.92 145.75 380.00 147.50 C387.08 149.25 395.50 152.29 402.50 155.00 C409.50 157.71 422.00 163.75 422.00 163.75Z" fill="#f1b181"/>
<path d="M365.00 308.75 C365.00 308.75 374.17 312.92 380.00 315.00 C385.83 317.08 393.33 319.67 400.00 321.25 C406.67 322.83 413.33 324.08 420.00 324.50 C426.67 324.92 433.33 324.50 440.00 323.75 C446.67 323.00 453.75 321.67 460.00 320.00 C466.25 318.33 472.71 315.50 477.50 313.75 C482.29 312.00 488.75 309.50 488.75 309.50 C488.75 309.50 496.29 320.75 500.00 327.00 C503.71 333.25 507.67 340.33 511.00 347.00 C514.33 353.67 517.50 360.67 520.00 367.00 C522.50 373.33 524.25 379.00 526.00 385.00 C527.75 391.00 529.08 396.33 530.50 403.00 C531.92 409.67 533.96 417.17 534.50 425.00 C535.04 432.83 534.92 441.67 533.75 450.00 C532.58 458.33 529.96 468.17 527.50 475.00 C525.04 481.83 522.29 485.83 519.00 491.00 C515.71 496.17 512.17 501.73 507.75 506.00 C503.33 510.27 497.12 513.78 492.50 516.60 C487.88 519.42 484.17 521.02 480.00 522.90 C475.83 524.78 471.67 526.45 467.50 527.90 C463.33 529.35 459.17 530.62 455.00 531.60 C450.83 532.58 446.67 533.27 442.50 533.75 C438.33 534.23 434.17 534.50 430.00 534.50 C425.83 534.50 421.67 534.23 417.50 533.75 C413.33 533.27 409.17 532.58 405.00 531.60 C400.83 530.62 396.67 529.35 392.50 527.90 C388.33 526.45 383.75 524.48 380.00 522.90 C376.25 521.32 373.42 520.12 370.00 518.40 C366.58 516.68 364.08 516.17 359.50 512.60 C354.92 509.03 347.15 502.77 342.50 497.00 C337.85 491.23 334.52 484.33 331.60 478.00 C328.68 471.67 326.60 466.17 325.00 459.00 C323.40 451.83 322.17 443.17 322.00 435.00 C321.83 426.83 322.75 417.50 324.00 410.00 C325.25 402.50 327.25 397.08 329.50 390.00 C331.75 382.92 334.50 374.83 337.50 367.50 C340.50 360.17 344.33 353.08 347.50 346.00 C350.67 338.92 353.58 331.21 356.50 325.00 C359.42 318.79 365.00 308.75 365.00 308.75Z" fill="#f1b181"/>
<ellipse cx="361.7" cy="204.7" rx="22.9" ry="19.8" fill="#4a2110"/>
<ellipse cx="482.8" cy="204.7" rx="22.8" ry="19.8" fill="#4a2110"/>
<circle cx="367.5" cy="199.2" r="8.1" fill="#fdf8f3"/>
<circle cx="487" cy="199.2" r="8.1" fill="#fdf8f3"/>
<ellipse cx="422" cy="227.6" rx="17.1" ry="9.4" fill="#4a2110"/>
<path d="M363 250.9 A77.3 77.3 0 0 0 484.4 250.9" fill="none" stroke="#4a2110" stroke-width="9.7" stroke-linecap="round"/>
<path d="M121.90 323.10 C121.90 323.10 126.36 320.68 128.75 320.00 C131.14 319.32 133.96 318.90 136.25 319.00 C138.54 319.10 140.62 319.90 142.50 320.60 C144.38 321.30 145.83 323.09 147.50 323.20 C149.17 323.31 151.35 321.99 152.50 321.25 C153.65 320.51 154.40 318.75 154.40 318.75 C154.40 318.75 150.80 315.00 150.80 315.00 C150.80 315.00 150.97 314.17 152.50 313.75 C154.03 313.33 158.43 313.02 160.00 312.50 C161.57 311.98 161.90 310.60 161.90 310.60 C161.90 310.60 158.75 306.25 158.75 306.25 C158.75 306.25 160.11 303.93 161.25 303.20 C162.39 302.47 164.46 302.64 165.60 301.90 C166.74 301.16 167.05 299.52 168.10 298.75 C169.15 297.98 170.75 297.14 171.90 297.25 C173.05 297.36 174.22 298.11 175.00 299.40 C175.78 300.69 176.50 302.82 176.60 305.00 C176.70 307.18 176.18 309.79 175.60 312.50 C175.02 315.21 174.03 318.54 173.10 321.25 C172.17 323.96 171.02 326.79 170.00 328.75 C168.98 330.71 169.42 329.96 167.00 333.00 C164.58 336.04 159.67 342.25 155.50 347.00 C151.33 351.75 147.25 357.23 142.00 361.50 C136.75 365.77 130.00 369.80 124.00 372.60 C118.00 375.40 111.92 377.23 106.00 378.30 C100.08 379.37 93.71 379.34 88.50 379.00 C83.29 378.66 78.08 378.32 74.75 376.25 C71.42 374.18 68.29 368.98 68.50 366.60 C68.71 364.23 72.17 364.50 76.00 362.00 C79.83 359.50 86.42 355.45 91.50 351.60 C96.58 347.75 101.43 343.65 106.50 338.90 C111.57 334.15 121.90 323.10 121.90 323.10Z" fill="#f9e211"/>
<path d="M67.8 369 L70.4 366.8 L74 375 L70.4 375.2 L67.9 372.6Z" fill="#703518" stroke="#703518" stroke-width="1.6" stroke-linejoin="round"/>
<path d="M570.2 415.2 C577 426 586 437 592.4 445.4 C593.2 446.6 593 447.4 592 448.2 C586 453.6 579 458.4 571.6 461 C571 448 570 430 570.2 415.2Z" fill="#fff"/>
<path d="M610.60 485.00 C611.42 485.42 612.17 486.50 612.40 488.50 C612.63 490.50 612.65 494.96 612.00 497.00 C611.35 499.04 610.12 499.29 608.50 500.75 C606.88 502.21 604.12 503.67 602.25 505.75 C600.38 507.83 598.92 510.54 597.25 513.25 C595.58 515.96 593.81 519.29 592.25 522.00 C590.69 524.71 588.73 527.42 587.90 529.50 C587.07 531.58 586.73 533.15 587.25 534.50 C587.77 535.85 589.54 537.28 591.00 537.60 C592.46 537.92 594.54 537.12 596.00 536.40 C597.46 535.67 598.42 534.61 599.75 533.25 C601.08 531.89 602.33 529.92 604.00 528.25 C605.67 526.58 607.75 524.19 609.75 523.25 C611.75 522.31 614.33 521.98 616.00 522.60 C617.67 523.23 618.71 525.02 619.75 527.00 C620.79 528.98 621.71 531.33 622.25 534.50 C622.79 537.67 623.00 546.00 623.00 546.00 C623.00 546.00 549.00 546.00 549.00 546.00 C549.00 546.00 547.12 538.73 546.00 536.40 C544.88 534.07 542.67 533.36 542.25 532.00 C541.83 530.64 542.04 529.92 543.50 528.25 C544.96 526.58 548.08 523.88 551.00 522.00 C553.92 520.12 557.25 518.88 561.00 517.00 C564.75 515.12 569.33 513.15 573.50 510.75 C577.67 508.35 581.83 505.52 586.00 502.60 C590.17 499.68 594.92 496.02 598.50 493.25 C602.08 490.48 605.48 487.38 607.50 486.00 C609.52 484.62 609.78 484.58 610.60 485.00Z" fill="#fff"/>
<ellipse cx="605.6" cy="541.6" rx="5.6" ry="4.6" fill="#703518"/>
<path d="M192 113.3 L287 125.6" stroke="#d61c1c" stroke-width="1.3" fill="none"/>
<path d="M292.8 126.4 L285.6 128.2 L286.3 123.2Z" fill="#d61c1c"/>
</g>
<g fill="none" stroke="#a3bbee" stroke-width="1.1">
<path d="M64.5 560V51.5H833.3"/><path d="M833.3 51.5V560" stroke="#94a9cc" stroke-width="1"/>
</g>
<g fill="#dfe6f8" stroke="#7a90d6" stroke-width="0.8">
<rect x="63" y="50" width="3" height="3"/><rect x="447.4" y="50" width="3" height="3"/><rect x="831.8" y="50" width="3" height="3"/>
<rect x="63" y="370.5" width="3" height="3"/><rect x="831.8" y="370.5" width="3" height="3"/>
</g>
</svg>
</div>
<div class="a" style="left:859px;top:50px;width:9.2px;height:491px;background:#4b4b4b;"></div><svg class="a" style="left:860.5px;top:53.2px" width="6" height="4" viewBox="0 0 6 4"><path d="M0.8 3 L2.9 1 L5 3" stroke="#9a9a9a" stroke-width="0.9" fill="none"/></svg><svg class="a" style="left:860.5px;top:533.8px" width="6" height="4" viewBox="0 0 6 4"><path d="M0.8 1 L2.9 3 L5 1" stroke="#9a9a9a" stroke-width="0.9" fill="none"/></svg><div class="a" style="left:860.3px;top:287.5px;width:5.6px;height:12.5px;background:#6c6c6c;border-radius:2.5px"></div>
<div class="a" style="left:868px;top:34px;width:156px;height:517px;background:#424242;"></div><svg class="a" style="left:881.6px;top:36px" width="6" height="4" viewBox="0 0 6 4"><path d="M2.2 0.6 L0.6 2 L2.2 3.4Z M4.6 0.6 L3 2 L4.6 3.4Z" fill="#c8c8c8"/></svg><svg class="a" style="left:1015.6px;top:36px" width="6" height="4" viewBox="0 0 6 4"><path d="M0.6 0.6 L2.2 2 L0.6 3.4Z M3 0.6 L4.6 2 L3 3.4Z" fill="#c8c8c8"/></svg><div class="a" style="left:869.6px;top:41.4px;width:19.6px;height:509px;background:#535353;"></div><div class="a" style="left:874px;top:43px;width:10px;height:1px;background:#474747;"></div><div class="a" style="left:869.6px;top:62px;width:19.6px;height:1px;background:#404040;"></div><svg class="a" style="left:874.8px;top:50px" width="10" height="8" viewBox="0 0 10 8"><defs><linearGradient id="dg" x1="0" x2="1"><stop offset="0" stop-color="#2e2e2e"/><stop offset="1" stop-color="#f6f6f6"/></linearGradient></defs><rect x="0.4" y="0.4" width="8.6" height="6.2" fill="url(#dg)" stroke="#cfcfcf" stroke-width="0.8"/></svg><div class="a" style="left:890.6px;top:41.4px;width:133.4px;height:509px;background:#535353;"></div><div class="a" style="left:890.6px;top:41.4px;width:133.4px;height:15.2px;background:#464646;"></div><div class="a" style="left:926.8px;top:41.4px;width:24.4px;height:15.4px;background:#535353;"></div><div class="t" style="left:895.50px;top:44.22px;font-size:6.3px;line-height:7.56px;color:#a2a2a2;font-weight:bold;transform:scaleX(0.793);opacity:1">Properties</div><div class="t" style="left:930.70px;top:44.22px;font-size:6.3px;line-height:7.56px;color:#f4f4f4;font-weight:bold;transform:scaleX(0.769);opacity:1">Layers</div><div class="t" style="left:956.00px;top:44.22px;font-size:6.3px;line-height:7.56px;color:#a2a2a2;font-weight:bold;transform:scaleX(0.814);opacity:1">Libraries</div><svg class="a" style="left:1015px;top:45.6px" width="6" height="5" viewBox="0 0 6 5"><path d="M0.4 0.6 H5.4 M0.4 2.4 H5.4 M0.4 4.2 H5.4" stroke="#9c9c9c" stroke-width="0.8"/></svg><div class="a" style="left:891.3px;top:70px;width:4.2px;height:469px;background:#585858;"></div><div class="a" style="left:891.4px;top:57.5px;width:129.6px;height:13px;background:#4b6a8e;"></div><svg class="a" style="left:895.6px;top:61.6px" width="8" height="5" viewBox="0 0 8 5"><path d="M0.4 2.5 C2 0.2 5.6 0.2 7.2 2.5 C5.6 4.8 2 4.8 0.4 2.5Z" fill="#e6e6e6"/><circle cx="3.8" cy="2.5" r="1.2" fill="#4b6a8e"/></svg><div class="a" style="left:916px;top:59.6px;width:2.2px;height:9.2px;background:#4f72e8;"></div><svg class="a" style="left:921.6px;top:61.4px" width="4" height="6" viewBox="0 0 4 6"><path d="M0.8 0.8 L3 2.8 L0.8 4.8" stroke="#f0f0f0" stroke-width="1" fill="none"/></svg><svg class="a" style="left:932.6px;top:59.8px" width="8.6" height="9" viewBox="0 0 8.6 9"><rect width="8.6" height="9" fill="#fbf6f0"/><ellipse cx="4.3" cy="3" rx="2.4" ry="2.1" fill="#8a3d16"/><ellipse cx="4.3" cy="3.5" rx="1.6" ry="1.3" fill="#eeae7e"/><path d="M2.4 5 H6.4 L7 9 H1.8Z" fill="#a04a1c"/><ellipse cx="4.3" cy="7.2" rx="1.5" ry="1.7" fill="#eeae7e"/><path d="M0.6 2.4 L1.6 5.6" stroke="#f0d020" stroke-width="0.9"/><path d="M6.8 2 C8.4 1.4 8.4 4 7.2 5.6" stroke="#a04a1c" stroke-width="0.8" fill="none"/></svg><div class="t" style="left:944.00px;top:61.16px;font-size:6.4px;line-height:7.68px;color:#f4f4f4;font-weight:normal;transform:scaleX(0.814);opacity:1">Layer 1</div><svg class="a" style="left:1004.2px;top:61.7px" width="6" height="6" viewBox="0 0 6 6"><circle cx="2.8" cy="2.8" r="2" fill="none" stroke="#d8d8d8" stroke-width="0.7"/></svg><div class="a" style="left:1012.2px;top:62.3px;width:5px;height:4.8px;background:#4668dc;border:1.1px solid #22348c"></div><svg class="a" style="left:1017.2px;top:59.2px" width="3.4" height="3.4" viewBox="0 0 3.4 3.4"><path d="M0 0 H3.2 V3.2Z" fill="#f0f0f0"/></svg><div class="a" style="left:890.6px;top:539px;width:133.4px;height:11.4px;background:#525252;border-top:1px solid #4b4b4b"></div><div class="a" style="left:1021.4px;top:56.6px;width:2.6px;height:482.4px;background:#4c4c4c;"></div><div class="t" style="left:892.60px;top:540.68px;font-size:6.2px;line-height:7.44px;color:#e0e0e0;font-weight:normal;transform:scaleX(0.858);opacity:1">1 Layer</div><svg class="a" style="left:933px;top:540.6px" width="8" height="8" viewBox="0 0 8 8"><path d="M3 1.6 H1 V7 H6.4 V5" stroke="#d0d0d0" stroke-width="0.9" fill="none"/><path d="M3.4 4.6 L7 1 M4.6 0.8 H7.2 V3.4" stroke="#d0d0d0" stroke-width="0.9" fill="none"/></svg><svg class="a" style="left:947.6px;top:540.8px" width="8" height="8" viewBox="0 0 8 8"><circle cx="3" cy="3" r="2.2" fill="none" stroke="#d8d8d8" stroke-width="1"/><path d="M4.6 4.6 L7 7" stroke="#d8d8d8" stroke-width="1.3"/></svg><svg class="a" style="left:961px;top:541px" width="7" height="7" viewBox="0 0 7 7"><rect x="0.6" y="2.4" width="3.6" height="3.8" fill="none" stroke="#6a6a6a" stroke-width="0.8"/><circle cx="4.6" cy="2.6" r="1.8" fill="none" stroke="#6a6a6a" stroke-width="0.8"/></svg><svg class="a" style="left:973.6px;top:540.6px" width="10" height="8" viewBox="0 0 10 8"><path d="M0.8 0.8 V2.6 H3" stroke="#d0d0d0" stroke-width="0.9" fill="none"/><rect x="3.6" y="2.4" width="5.6" height="4.4" fill="#8a8a8a" stroke="#d0d0d0" stroke-width="0.9"/></svg><svg class="a" style="left:989.4px;top:540.8px" width="8" height="8" viewBox="0 0 8 8"><rect x="0.6" y="0.6" width="6" height="6.4" fill="none" stroke="#d8d8d8" stroke-width="0.9"/><path d="M3.6 2.4 V5.2 M2.2 3.8 H5" stroke="#d8d8d8" stroke-width="0.9"/></svg><svg class="a" style="left:1003px;top:540.8px" width="7" height="8" viewBox="0 0 7 8"><path d="M0.6 1.6 H5.6 M1.2 1.6 V7 H5 V1.6 M2.2 0.6 H4" stroke="#686868" stroke-width="0.8" fill="none"/></svg>
<div class="a" style="left:40px;top:541px;width:829px;height:10px;background:#4b4b4b;"></div><div class="a" style="left:0px;top:550px;width:1024px;height:1px;background:#414141;"></div><div class="a" style="left:40.6px;top:541.8px;width:35px;height:8px;background:#424242;"></div><div class="t" style="left:43.00px;top:542.90px;font-size:6px;line-height:7.20px;color:#e0e0e0;font-weight:normal;transform:scaleX(0.880);opacity:1">300%</div><svg class="a" style="left:70px;top:544.7px" width="6" height="4" viewBox="0 0 6 4"><path d="M0.8 0.8 L2.6 2.7 L4.4 0.8" stroke="#d8d8d8" stroke-width="1" fill="none"/></svg><div class="a" style="left:80px;top:541.8px;width:35px;height:8px;background:#424242;"></div><div class="t" style="left:82.40px;top:542.90px;font-size:6px;line-height:7.20px;color:#e0e0e0;font-weight:normal;transform:scaleX(0.889);opacity:1">0°</div><svg class="a" style="left:109px;top:544.7px" width="6" height="4" viewBox="0 0 6 4"><path d="M0.8 0.8 L2.6 2.7 L4.4 0.8" stroke="#d8d8d8" stroke-width="1" fill="none"/></svg><svg class="a" style="left:120.5px;top:543.4px" width="16" height="5" viewBox="0 0 16 5"><path d="M1 0.6 V4.4 M4.4 0.6 L2 2.5 L4.4 4.4Z M10.4 0.6 L8 2.5 L10.4 4.4Z" fill="#6a6a6a" stroke="#6a6a6a" stroke-width="0.7"/></svg><div class="a" style="left:138px;top:541.8px;width:32px;height:8px;background:#424242;"></div><div class="t" style="left:141.00px;top:542.90px;font-size:6px;line-height:7.20px;color:#e0e0e0;font-weight:normal;transform:scaleX(0.719);opacity:1">1</div><svg class="a" style="left:162.6px;top:544.7px" width="6" height="4" viewBox="0 0 6 4"><path d="M0.8 0.8 L2.6 2.7 L4.4 0.8" stroke="#d8d8d8" stroke-width="1" fill="none"/></svg><svg class="a" style="left:173.5px;top:543.4px" width="16" height="5" viewBox="0 0 16 5"><path d="M1.6 0.6 L4 2.5 L1.6 4.4Z M9 0.6 L11.4 2.5 L9 4.4Z M12.8 0.6 V4.4" fill="#6a6a6a" stroke="#6a6a6a" stroke-width="0.7"/></svg><div class="t" style="left:227.00px;top:542.90px;font-size:6px;line-height:7.20px;color:#c8c8c8;font-weight:normal;transform:scaleX(0.863);opacity:1">Toggle Selection</div><svg class="a" style="left:302.5px;top:543.3px" width="4" height="5.4" viewBox="0 0 4 5.4"><path d="M0.6 0.4 L3.4 2.7 L0.6 5Z" fill="#d0d0d0"/></svg><svg class="a" style="left:312.6px;top:543.5px" width="3" height="5" viewBox="0 0 3 5"><path d="M2.2 0.6 L0.8 2.5 L2.2 4.4" stroke="#9a9a9a" stroke-width="0.8" fill="none"/></svg><div class="a" style="left:577.3px;top:542.8px;width:13.3px;height:6.4px;background:#686868;border-radius:3px"></div><svg class="a" style="left:853px;top:543.5px" width="3" height="5" viewBox="0 0 3 5"><path d="M0.8 0.6 L2.2 2.5 L0.8 4.4" stroke="#9a9a9a" stroke-width="0.8" fill="none"/></svg>
</div>
</body></html>
